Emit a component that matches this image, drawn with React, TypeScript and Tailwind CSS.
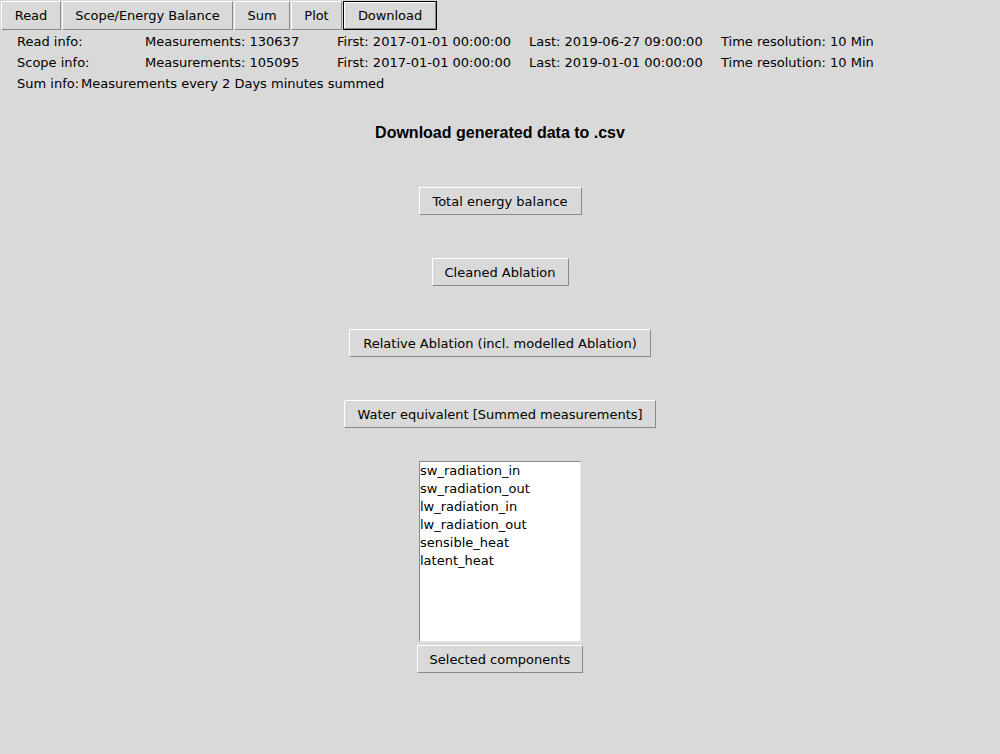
import React from 'react';

const font = "font-['DejaVu_Sans',sans-serif]";

const raised =
  'bg-[#d9d9d9] border border-t-white border-l-white border-b-[#8a8a8a] border-r-[#8a8a8a] text-[13px] text-black flex items-center justify-center leading-none';

const TabButton: React.FC<{ label: string; width: string; active?: boolean }> = ({ label, width, active }) => {
  if (active) {
    return (
      <div className={`${width} h-[29px] border border-black`}>
        <div className={`${raised} w-full h-full`}>{label}</div>
      </div>
    );
  }
  return <div className={`${raised} ${width} h-[29px]`}>{label}</div>;
};

const ActionButton: React.FC<{ label: string; width: string; className?: string }> = ({ label, width, className }) => (
  <div className={`${raised} ${width} h-[28px] ${className ?? ''}`}>{label}</div>
);

const components = [
  'sw_radiation_in',
  'sw_radiation_out',
  'lw_radiation_in',
  'lw_radiation_out',
  'sensible_heat',
  'latent_heat',
];

export default function App() {
  return (
    <div className={`w-[1000px] h-[754px] bg-[#d9d9d9] overflow-hidden ${font} text-black`}>
      {/* tab buttons */}
      <div className="flex gap-[1px] pl-[1px] pt-[1px] tracking-[-0.05px]">
        <TabButton label="Read" width="w-[60px]" />
        <TabButton label="Scope/Energy Balance" width="w-[171px]" />
        <TabButton label="Sum" width="w-[56px]" />
        <TabButton label="Plot" width="w-[51px]" />
        <TabButton label="Download" width="w-[94px]" active />
      </div>

      {/* info rows */}
      <div className="pl-[17px] pt-[1px] text-[13px] leading-[21px]">
        <div className="flex">
          <span className="w-[128px]">Read info:</span>
          <span className="w-[192px]">Measurements: 130637</span>
          <span className="w-[192px]">First: 2017-01-01 00:00:00</span>
          <span className="w-[192px]">Last: 2019-06-27 09:00:00</span>
          <span>Time resolution: 10 Min</span>
        </div>
        <div className="flex">
          <span className="w-[128px]">Scope info:</span>
          <span className="w-[192px]">Measurements: 105095</span>
          <span className="w-[192px]">First: 2017-01-01 00:00:00</span>
          <span className="w-[192px]">Last: 2019-01-01 00:00:00</span>
          <span>Time resolution: 10 Min</span>
        </div>
        <div className="flex">
          <span className="w-[64px]">Sum info:</span>
          <span>Measurements every 2 Days minutes summed</span>
        </div>
      </div>

      {/* download panel */}
      <div className="flex flex-col items-center">
        <div className="mt-[29px] h-[20px] leading-[20px] text-[16px] font-bold font-['Liberation_Sans',sans-serif]">
          Download generated data to .csv
        </div>
        <ActionButton label="Total energy balance" width="w-[163px]" className="mt-[44px]" />
        <ActionButton label="Cleaned Ablation" width="w-[137px]" className="mt-[43px]" />
        <ActionButton label="Relative Ablation (incl. modelled Ablation)" width="w-[302px]" className="mt-[43px]" />
        <ActionButton label="Water equivalent [Summed measurements]" width="w-[312px]" className="mt-[43px]" />

        <div className="mt-[33px] w-[162px] h-[181px] bg-white border border-t-[#8a8a8a] border-l-[#8a8a8a] border-b-[#e8e8e8] border-r-[#e8e8e8] text-[13px] leading-[18px]">
          {components.map((c) => (
            <div key={c}>{c}</div>
          ))}
        </div>
        <ActionButton label="Selected components" width="w-[166px]" className="mt-[3px]" />
      </div>
    </div>
  );
}
